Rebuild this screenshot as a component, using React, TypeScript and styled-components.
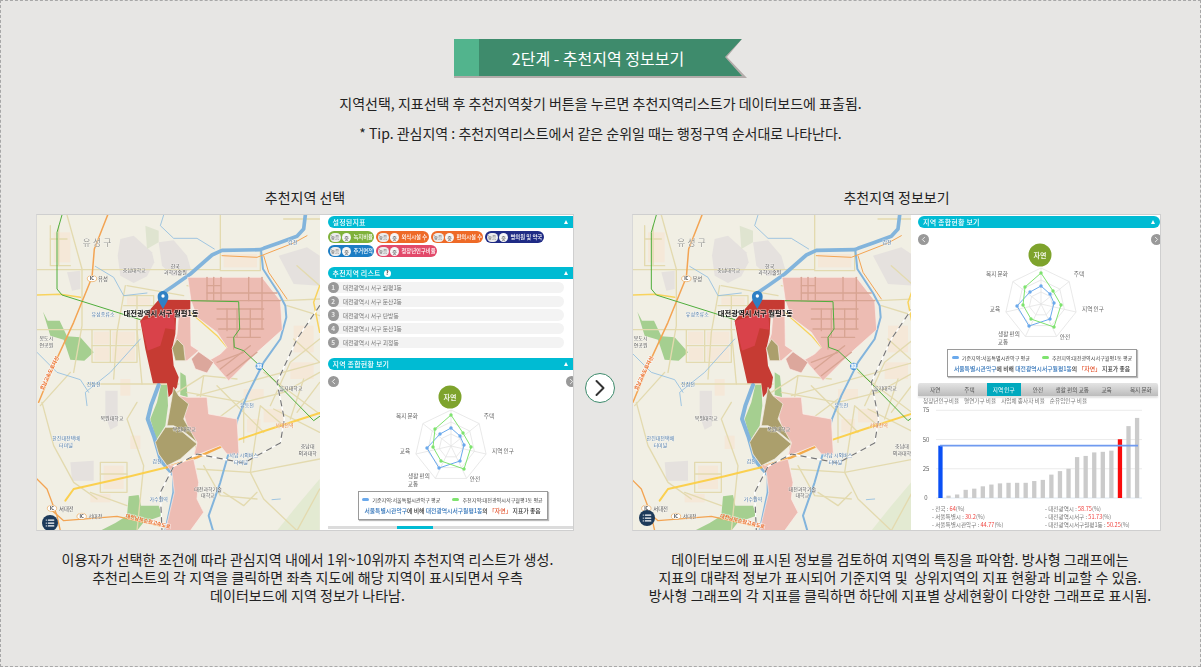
import React from "react";
import styled, { createGlobalStyle } from "styled-components";
import { ChevronLeft, ChevronRight, List } from "lucide-react";

const FONT = '"Noto Sans CJK KR", "Noto Sans", sans-serif';

const GlobalStyle = createGlobalStyle`
  html, body { margin: 0; padding: 0; background: #e7e6e4; }
  * { box-sizing: border-box; }
  body { font-family: ${FONT}; }
`;

/* ---------- map drawing, numbers are in 3x crop coordinates ---------- */

const WATER = [
  { d: "M825 28 L820 70 L800 92 L745 112 L700 128 L690 132 L575 134 L545 148 L480 205 L430 240 L398 262", w: 11 },
  { d: "M692 132 L698 190 L745 262 L765 300 L768 335 L750 400 L700 470 L650 570 L622 640 L600 725 L570 830 L535 930 L548 975", w: 6 },
  { d: "M385 538 L362 600 L352 640 L372 695 L392 765 L432 810 L432 860 L408 975", w: 12 },
];
const STREAMS = [
  "M20 440 L80 500 L150 522 L175 560",
  "M195 182 L250 215 L280 270 L350 262",
  "M400 28 L390 60 L430 98 L500 98 L552 130",
  "M170 600 L165 560 L240 500 L330 400",
  "M725 882 L750 880",
];
const ROADS = [
  "M20 192 L570 192 L570 28",
  "M20 372 L330 372",
  "M110 28 L155 190 L155 360 L130 500",
  "M285 240 L260 380 L250 520",
  "M170 535 L445 535",
  "M35 590 L70 720 L130 830 L200 880",
  "M470 240 L760 285 L868 280",
  "M690 130 L690 195 L570 195",
  "M470 560 L640 590 L760 560 L868 500",
  "M520 510 L500 640 L495 745",
  "M640 580 L560 640 L520 660",
  "M760 660 L690 600 L660 800 L700 880 L800 975",
  "M500 790 L660 800 L868 760",
  "M320 590 L290 640 L340 780 L320 975",
  "M210 770 L210 860 L290 860 L290 770 L210 770",
  "M210 805 L290 805",
  "M185 372 L185 470 L320 470 L320 372",
  "M240 372 L240 470",
  "M185 420 L320 420",
  "M868 400 L780 470 L720 600",
  "M580 860 L640 900 L680 860",
  "M60 60 L60 180 L120 180",
  "M85 60 L85 180",
  "M60 100 L110 100",
  "M800 975 L868 850",
  "M290 240 L460 270",
  "M280 270 L370 270 L370 340",
  "M280 300 L370 300",
  "M320 270 L320 372",
  "M320 372 L335 535",
  "M500 570 L868 470",
  "M560 540 L700 680",
  "M640 590 L640 710",
  "M700 500 L868 625",
  "M520 780 L570 870 L680 880",
  "M800 180 L868 240",
  "M770 300 L868 330",
  "M790 400 L868 470",
  "M820 520 L780 640",
  "M730 610 L868 680",
  "M120 500 L30 600",
  "M180 860 L290 900",
  "M760 40 L868 40",
  "M868 530 L800 620",
  "M440 560 L520 510 L620 520",
];
const BLOCKS = [
  { x: 190, y: 378, w: 46, h: 38 }, { x: 246, y: 378, w: 68, h: 38 }, { x: 192, y: 425, w: 44, h: 40 },
  { x: 246, y: 425, w: 68, h: 40 }, { x: 290, y: 275, w: 70, h: 22 }, { x: 700, y: 300, w: 50, h: 50 },
  { x: 640, y: 550, w: 60, h: 30 }, { x: 700, y: 610, w: 60, h: 40 }, { x: 220, y: 780, w: 60, h: 70 },
  { x: 780, y: 470, w: 70, h: 50 }, { x: 70, y: 80, w: 50, h: 90 }, { x: 270, y: 520, w: 30, h: 50 },
  { x: 580, y: 145, w: 100, h: 40 }, { x: 790, y: 360, w: 60, h: 80 }, { x: 180, y: 865, w: 60, h: 25 },
  { x: 300, y: 690, w: 30, h: 40 }, { x: 650, y: 640, w: 40, h: 40 },
];
const PARKS = [
  "M38 318 L52 345 L88 345 L110 392 L150 395 L190 440 L162 465 L120 462 L100 402 L60 390 Z",
  "M295 872 L325 868 L332 900 L385 900 L395 930 L340 950 L320 975 L210 975 L255 952 L290 930 Z",
  "M392 538 L410 538 L413 600 L405 660 L378 702 L360 640 L380 590 Z",
  "M450 500 L466 510 L472 575 L450 568 Z",
  "M740 975 L800 900 L868 820 L868 975 Z",
  "M345 60 L385 75 L385 110 L350 130 Z",
];
const CAMPUS = [
  "M270 100 L310 90 L365 140 L372 170 L350 212 L310 232 L270 210 L262 150 Z",
  "M385 110 L430 104 L470 150 L482 192 L430 212 L395 180 Z",
  "M225 555 L262 555 L262 660 L240 672 L225 630 Z",
  "M110 200 L150 195 L150 250 L125 255 Z",
  "M120 770 L190 765 L190 825 L125 825 Z",
  "M745 150 L830 125 L868 150 L868 240 L790 235 Z",
];
const PINK = [
  "M472 215 L695 215 L750 285 L756 372 L680 440 L595 525 L540 462 L570 445 L590 425 L560 380 L500 335 L482 285 Z",
  "M445 325 L480 285 L482 420 L505 435 L470 465 L435 465 L425 430 L440 385 Z",
  "M445 570 L470 575 L530 575 L535 625 L620 640 L626 745 L590 745 L570 720 L490 752 L500 712 L470 660 Z",
  "M380 705 L420 780 L490 760 L505 830 L500 880 L520 920 L480 975 L405 975 L432 860 L425 800 L385 745 Z",
];
const PINK_GRID = [
  "M530 215 L530 285", "M550 215 L550 285", "M572 215 L572 285", "M655 215 L655 285", "M695 215 L695 285",
  "M530 240 L570 240", "M530 262 L740 262", "M482 285 L750 285", "M560 310 L700 310", "M560 340 L700 340",
  "M565 370 L700 370", "M590 395 L690 395", "M610 400 L610 430", "M560 470 L640 440", "M570 490 L660 420", "M590 510 L680 440",
  "M590 310 L590 375", "M620 310 L620 395", "M660 310 L660 395", "M695 285 L695 370",
];
const OLIVE = [
  "M425 428 L440 400 L460 420 L465 465 L435 465 Z",
  "M410 660 L430 545 L445 570 L475 595 L460 640 L500 710 L470 685 L430 660 Z",
  "M375 710 L405 665 L440 665 L500 715 L450 760 L410 780 L385 745 Z",
];

const MAP_LABELS = [
  { x: 200, y: 122, t: "유 성 구", c: "#9a9a94", s: 27 },
  { x: 312, y: 198, t: "충남대학교", c: "#555", s: 15 },
  { x: 435, y: 188, t: "한국", c: "#555", s: 15 },
  { x: 435, y: 206, t: "과학기술원", c: "#555", s: 15 },
  { x: 218, y: 225, t: "유성", c: "#555", s: 16 },
  { x: 218, y: 332, t: "유성종류소", c: "#4b78a8", s: 15 },
  { x: 48, y: 402, t: "봉도시", c: "#555", s: 15 },
  { x: 48, y: 425, t: "연공원", c: "#555", s: 15 },
  { x: 190, y: 540, t: "진잠천", c: "#4b78a8", s: 15 },
  { x: 245, y: 644, t: "목원대학교", c: "#555", s: 15 },
  { x: 107, y: 704, t: "한진대전택배", c: "#4b78a8", s: 15 },
  { x: 107, y: 724, t: "터미널", c: "#4b78a8", s: 15 },
  { x: 108, y: 915, t: "서대전", c: "#555", s: 16 },
  { x: 195, y: 938, t: "서대전", c: "#555", s: 15 },
  { x: 385, y: 885, t: "가수원역", c: "#4b78a8", s: 15 },
  { x: 533, y: 855, t: "대전과학기술", c: "#555", s: 15 },
  { x: 533, y: 875, t: "대학교", c: "#555", s: 15 },
  { x: 650, y: 603, t: "유등천", c: "#4b78a8", s: 15 },
  { x: 782, y: 554, t: "을지대학교", c: "#555", s: 15 },
  { x: 832, y: 728, t: "충남대", c: "#555", s: 15 },
  { x: 832, y: 747, t: "의과대학", c: "#555", s: 15 },
  { x: 762, y: 665, t: "서대전역", c: "#e2762a", s: 15 },
  { x: 640, y: 754, t: "서남 시외버스", c: "#4b78a8", s: 15 },
  { x: 632, y: 774, t: "터미널", c: "#4b78a8", s: 15 },
  { x: 380, y: 772, t: "갑천", c: "#4b78a8", s: 15 },
  { x: 787, y: 114, t: "갑천", c: "#4b78a8", s: 15 },
  { x: 462, y: 675, t: "목원대학교", c: "#555", s: 15 },
];

const MapLine = styled.path<{ $color: string; $w: number; $dash?: string }>`
  fill: none;
  stroke: ${(p) => p.$color};
  stroke-width: ${(p) => p.$w};
  stroke-linecap: round;
  stroke-linejoin: round;
  stroke-dasharray: ${(p) => p.$dash || "none"};
`;
const MapArea = styled.path<{ $fill: string; $edge?: string }>`
  fill: ${(p) => p.$fill};
  stroke: ${(p) => p.$edge || "none"};
  stroke-width: 2;
`;
const MapText = styled.text<{ $color: string; $size: number; $bold?: boolean }>`
  font-family: ${FONT};
  font-size: ${(p) => p.$size}px;
  font-weight: ${(p) => (p.$bold ? 700 : 400)};
  fill: ${(p) => p.$color};
  text-anchor: middle;
  paint-order: stroke;
  stroke: rgba(255, 255, 255, 0.6);
  stroke-width: ${(p) => (p.$bold ? 4 : 2)}px;
`;
const MapSvg = styled.svg`
  display: block;
  width: 100%;
  height: 100%;
  background: #f1efe4;
`;

function ICBadge({ x, y }: { x: number; y: number }) {
  return (
    <g>
      <ellipse cx={x} cy={y} rx={14} ry={9} fill="#fff" stroke="#e9a24f" strokeWidth={2} />
      <MapText x={x} y={y + 5} $color="#333" $size={13} $bold>IC</MapText>
    </g>
  );
}

function MapDrawing({ viewWidth, viewLeft }: { viewWidth: number; viewLeft: number }) {
  return (
    <MapSvg viewBox={`${viewLeft} 28 ${viewWidth} 947`} preserveAspectRatio="xMinYMin slice">
      {BLOCKS.map((b, i) => <rect key={i} x={b.x} y={b.y} width={b.w} height={b.h} fill="#f5e8d8" />)}
      {CAMPUS.map((d, i) => <MapArea key={i} d={d} $fill="#e5e1de" />)}
      {PARKS.map((d, i) => <MapArea key={i} d={d} $fill={i === 4 ? "#e3ead2" : i === 5 ? "#dfe4d0" : "#a5cf90"} />)}
      {ROADS.map((d, i) => <MapLine key={i} d={d} $color="#e3daaf" $w={4} />)}
      {STREAMS.map((d, i) => <MapLine key={i} d={d} $color="#8fbde0" $w={2.5} />)}
      {WATER.map((r, i) => <MapLine key={i} d={r.d} $color="#82b4dc" $w={r.w} />)}
      {/* highways */}
      <MapLine d="M232 28 L192 130 L185 215 L130 350 L70 480 L25 590" $color="#f3a453" $w={4.5} />
      <MapLine d="M20 268 L90 266 L150 275" $color="#f8d35e" $w={4.5} />
      <MapLine d="M868 240 L850 290 L868 380" $color="#f8d35e" $w={4.5} />
      <MapLine d="M105 885 L130 850 L300 812 L410 785" $color="#fbd04f" $w={6} />
      <MapLine d="M410 785 L500 755 L600 710" $color="#f4ab4a" $w={7} />
      <MapLine d="M600 710 L720 670 L868 622" $color="#fbd04f" $w={6} />
      <MapLine d="M575 150 L680 155 L790 112 L830 90" $color="#f3a453" $w={3} />
      <MapLine d="M700 150 L715 200 L770 280" $color="#f3a453" $w={3} />
      <MapLine d="M20 820 L50 850 L80 930 L90 975" $color="#f3a453" $w={4} />
      <MapLine d="M60 910 L100 945 L260 932 L440 972" $color="#f3a453" $w={4} />
      <MapLine d="M480 320 L560 390 L590 425" $color="#f8d35e" $w={4} />
      {PINK.map((d, i) => <MapArea key={i} d={d} $fill="#edbcb3" $edge="#fbeeea" />)}
      {PINK_GRID.map((d, i) => <MapLine key={i} d={d} $color="#d8a493" $w={4} />)}
      <MapArea d="M483 460 L505 438 L550 470 L530 502 L495 490 Z" $fill="#dca79c" $edge="#fbeeea" />
      {/* selected dong */}
      <MapArea d="M330 345 L385 282 L480 283 L480 310 L438 320 L435 385 L425 430 L430 480 L445 515 L440 545 L415 575 L410 533 L368 533 L345 430 Z" $fill="#c63b33" />
      <MapArea d="M330 345 L430 320 L435 372 L405 368 L390 420 L352 435 Z" $fill="#d9424a" />
      {OLIVE.map((d, i) => <MapArea key={i} d={d} $fill="#ab9f6c" $edge="#f4efe6" />)}
      {/* subway */}
      <MapLine d="M95 28 L80 80 L80 250 L95 268 L330 342" $color="#4fae3c" $w={3} />
      <MapLine d="M482 285 L625 288 L628 370 L610 395 L612 425 L640 435 L690 482 L850 645 L868 632" $color="#4fae3c" $w={3} />
      {/* railway */}
      <MapLine d="M868 300 L800 400 L740 530 L762 640 L750 712 L640 772 L500 745 L430 782 L390 860 L395 975" $color="#fff" $w={4} />
      <MapLine d="M868 300 L800 400 L740 530 L762 640 L750 712 L640 772 L500 745 L430 782 L390 860 L395 975" $color="#777" $w={3.5} $dash="16 16" />
      <ICBadge x={185} y={219} />
      <ICBadge x={65} y={908} />
      <ICBadge x={154} y={932} />
      <circle cx={687} cy={482} r={11} fill="#3f8fd8" />
      <MapText x={687} y={487} $color="#fff" $size={13} $bold>32</MapText>
      {MAP_LABELS.map((l) => <MapText key={l.x + l.t} x={l.x} y={l.y} $color={l.c} $size={l.s}>{l.t}</MapText>)}
      <MapText x={0} y={0} $color="#ec6d2d" $size={15} $bold transform="translate(62 505) rotate(-64)">호남고속도로지선</MapText>
      <MapText x={0} y={0} $color="#ec6d2d" $size={15} $bold transform="translate(352 952) rotate(14)">대전남부순환고속도로</MapText>
      <MapText x={392} y={332} $color="#111" $size={22} $bold>대전광역시 서구 월평1동</MapText>
      {/* pin */}
      <path d="M398 310 C390 294 382 286 382 273 C382 263 389 256 398 256 C407 256 414 263 414 273 C414 286 406 294 398 310 Z" fill="#2f80c4" />
      <circle cx={398} cy={271} r={5} fill="#fff" />
    </MapSvg>
  );
}

/* ---------- dashboard parts ---------- */

const Bar = styled.div<{ $round?: boolean }>`
  height: 12px;
  background: #00bbd3;
  border-radius: ${(p) => (p.$round ? "6px" : "6px 0 0 6px")};
  color: #fff;
  font-size: 7px;
  font-weight: 500;
  letter-spacing: 0.2px;
  display: flex;
  align-items: center;
  padding: 0 5px;
  gap: 3px;
`;
const BarArrow = styled.span`
  margin-left: auto;
  width: 0;
  height: 0;
  border-left: 2.5px solid transparent;
  border-right: 2.5px solid transparent;
  border-bottom: 4px solid #fff;
`;
const HelpMark = styled.span`
  width: 7px;
  height: 7px;
  border-radius: 50%;
  background: #fff;
  color: #333;
  font-size: 5.5px;
  font-weight: 700;
  line-height: 7px;
  text-align: center;
`;

const ChipWrap = styled.div`
  display: flex;
  flex-wrap: wrap;
  gap: 2px 2px;
  margin: 3px 0 10px;
  width: 225px;
`;
const Chip = styled.span<{ $color: string; $width: number }>`
  width: ${(p) => p.$width}px;
  height: 12px;
  border-radius: 6px;
  background: ${(p) => p.$color};
  display: inline-flex;
  align-items: center;
  padding: 0 2px;
  gap: 1.5px;
  color: #fff;
  font-size: 5.3px;
  font-weight: 500;
  white-space: nowrap;
`;
const ChipLevel = styled.span`
  flex: none;
  width: 11px;
  height: 9px;
  border-radius: 5px;
  background: #ececec;
  color: #888;
  font-size: 4.6px;
  line-height: 9px;
  text-align: center;
`;
const ChipGrade = styled.span`
  flex: none;
  width: 9px;
  height: 9px;
  border-radius: 50%;
  background: #f6f6f6;
  color: #777;
  font-size: 5px;
  line-height: 9px;
  text-align: center;
  margin-right: 1px;
`;

const RankList = styled.ol`
  list-style: none;
  margin: 3px 0 10px;
  padding: 0;
  display: flex;
  flex-direction: column;
  gap: 2.4px;
`;
const RankRow = styled.li`
  width: 236px;
  height: 11.3px;
  border-radius: 6px;
  background: #f3f3f3;
  display: flex;
  align-items: center;
  gap: 4px;
  color: #777;
  font-size: 5.8px;
`;
const RankNum = styled.span`
  width: 11.3px;
  height: 11.3px;
  border-radius: 50%;
  background: #999;
  color: #e8e8e8;
  font-size: 6.5px;
  font-weight: 700;
  line-height: 11.3px;
  text-align: center;
`;

const SummaryBox = styled.div`
  position: relative;
  height: 121px;
  padding-top: 6px;
`;
const RoundNav = styled.span<{ $side: "left" | "right"; $offset: number }>`
  position: absolute;
  top: 6px;
  ${(p) => p.$side}: ${(p) => p.$offset}px;
  width: 11px;
  height: 11px;
  border-radius: 50%;
  background: #999;
  color: #eee;
  display: flex;
  align-items: center;
  justify-content: center;
`;
const RadarSvg = styled.svg`
  display: block;
  width: 240px;
  height: 115px;
`;
const RadarText = styled.text`
  font-family: ${FONT};
  font-size: 5.6px;
  fill: #666;
  text-anchor: middle;
`;
const RadarBadge = styled.text`
  font-family: ${FONT};
  font-size: 7px;
  font-weight: 700;
  fill: #f1f5e6;
  text-anchor: middle;
`;

const RADAR_GREEN = [[0, -31], [12, -13], [20, 1], [13, 23], [-10, 15], [-18, 1], [-16, -17]];
const RADAR_BLUE = [[0, -18], [9, -10], [13, -1], [9, 15], [-12, 22], [-24, 2], [-11, -12]];
const RADAR_LABELS = [
  { x: 38, y: -28, t: "주택" },
  { x: 52, y: 7, t: "지역 인구" },
  { x: 24, y: 35, t: "안전" },
  { x: -32, y: 32, t: "생활 편의" },
  { x: -38, y: 40, t: "교통" },
  { x: -46, y: 7, t: "교육" },
  { x: -44, y: -28, t: "복지 문화" },
];

const toPoints = (list: number[][]) => list.map(([x, y]) => `${x},${y}`).join(" ");
const ringPoints = (r: number) =>
  Array.from({ length: 7 }, (_, i) => {
    const a = (i * 2 * Math.PI) / 7 - Math.PI / 2;
    return [Math.cos(a) * r, Math.sin(a) * r];
  });

function RadarChart() {
  return (
    <RadarSvg viewBox="0 0 240 115">
      <circle cx={122} cy={21} r={11.5} fill="#7ea32c" />
      <RadarBadge x={122} y={24}>자연</RadarBadge>
      <g transform="translate(123 70)">
        {[12, 24, 36].map((r) => (
          <polygon key={r} points={toPoints(ringPoints(r))} fill="none" stroke="#e3e3e3" strokeWidth={0.8} />
        ))}
        {ringPoints(36).map(([x, y], i) => (
          <line key={i} x1={0} y1={0} x2={x} y2={y} stroke="#e3e3e3" strokeWidth={0.8} />
        ))}
        <polygon points={toPoints(RADAR_BLUE)} fill="none" stroke="#6aa9ec" strokeWidth={1} />
        <polygon points={toPoints(RADAR_GREEN)} fill="none" stroke="#7fe36f" strokeWidth={1} />
        {RADAR_BLUE.map(([x, y], i) => <circle key={i} cx={x} cy={y} r={1.7} fill="#6aa9ec" />)}
        {RADAR_GREEN.map(([x, y], i) => <circle key={i} cx={x} cy={y} r={1.7} fill="#7fe36f" />)}
        {RADAR_LABELS.map((l) => <RadarText key={l.t} x={l.x} y={l.y}>{l.t}</RadarText>)}
      </g>
    </RadarSvg>
  );
}

const LegendBox = styled.div<{ $tall?: boolean }>`
  width: 190px;
  height: ${(p) => (p.$tall ? 29 : 28)}px;
  margin-left: ${(p) => (p.$tall ? 30 : 29)}px;
  border: 1px solid #9a9a9a;
  box-shadow: 1px 1px 1px #bbb;
  background: #fff;
  display: flex;
  flex-direction: column;
  align-items: center;
  justify-content: center;
  gap: 3px;
  font-size: 5.1px;
  color: #444;
  white-space: nowrap;
`;
const LegendKeys = styled.div`
  display: flex;
  gap: 12px;
`;
const LegendKey = styled.span<{ $color: string }>`
  display: inline-flex;
  align-items: center;
  gap: 3px;
  &::before {
    content: "";
    width: 7px;
    height: 3px;
    border-radius: 2px;
    background: ${(p) => p.$color};
  }
`;
const LegendNote = styled.div`
  font-size: 5.8px;
  font-weight: 500;
  color: #333;
`;
const Tone = styled.span<{ $color: string }>`
  color: ${(p) => p.$color};
`;

function Legend({ tall }: { tall?: boolean }) {
  return (
    <LegendBox $tall={tall}>
      <LegendKeys>
        <LegendKey $color="#6aa9ec">기준지역:서울특별시관악구 평균</LegendKey>
        <LegendKey $color="#7fe36f">추천지역:대전광역시서구월평1동 평균</LegendKey>
      </LegendKeys>
      <LegendNote>
        <Tone $color="#2f72b8">서울특별시관악구</Tone>에 비해 <Tone $color="#2f72b8">대전광역시서구월평1동</Tone>의{" "}
        <Tone $color="#e2502a">「자연」</Tone> 지표가 좋음
      </LegendNote>
    </LegendBox>
  );
}

const ScrollTrack = styled.div`
  height: 3px;
  margin-top: 6px;
  background: #dcdcdc;
  padding-left: 69px;
`;
const ScrollThumb = styled.div`
  width: 36px;
  height: 3px;
  background: #00bbd3;
`;

const TabStrip = styled.div`
  display: grid;
  grid-template-columns: repeat(7, 1fr);
  width: 240px;
  height: 13px;
  margin-top: 6px;
  background: linear-gradient(#e4e4e4, #bcbcbc);
  border-radius: 2px 2px 0 0;
  box-shadow: 0 2px 2px #e2e2e2;
`;
const Tab = styled.span<{ $active?: boolean }>`
  display: flex;
  align-items: center;
  justify-content: center;
  font-size: 5.6px;
  white-space: nowrap;
  color: ${(p) => (p.$active ? "#fff" : "#555")};
  background: ${(p) => (p.$active ? "#00a9be" : "transparent")};
`;
const SubMenu = styled.div`
  display: flex;
  gap: 5px;
  height: 8px;
  margin-top: 1px;
  padding-left: 5px;
  align-items: center;
  font-size: 5.6px;
  color: #777;
  white-space: nowrap;
`;
const BarSvg = styled.svg`
  display: block;
  width: 242px;
  height: 100px;
`;
const AxisText = styled.text`
  font-family: ${FONT};
  font-size: 6px;
  fill: #666;
  text-anchor: middle;
`;

const BAR_VALUES = [2, 3, 7, 8, 10, 11.5, 12.5, 13, 13, 13, 14.5, 15.5, 20, 23, 25, 35, 36, 39, 39.5, 40.5, 50.25, 61.5, 68.5];
const valueY = (v: number) => 91 - v * 1.169;

function BarChart() {
  return (
    <BarSvg viewBox="0 -2 242 100">
      {[75, 50, 25, 0].map((v) => (
        <g key={v}>
          <line x1={18} x2={224} y1={valueY(v)} y2={valueY(v)} stroke={v === 0 ? "#d7e3ef" : "#e6e6e6"} strokeWidth={0.8} />
          <AxisText x={8} y={valueY(v) + 2}>{v}</AxisText>
        </g>
      ))}
      <rect x={20.3} y={valueY(44.77)} width={4.3} height={91 - valueY(44.77)} fill="#0a50f5" />
      {BAR_VALUES.map((v, i) => (
        <rect
          key={i}
          x={28.4 + i * 8.57}
          y={valueY(v)}
          width={4.3}
          height={91 - valueY(v)}
          fill={v === 50.25 ? "#fa0a0a" : "#cbcbcb"}
        />
      ))}
      <line x1={22} x2={220} y1={valueY(44.77)} y2={valueY(44.77)} stroke="#6f9af0" strokeWidth={1.6} />
    </BarSvg>
  );
}

const StatGrid = styled.div`
  display: grid;
  grid-template-columns: 113px 1fr;
  grid-auto-rows: 8px;
  padding-left: 14px;
  font-size: 5.6px;
  color: #777;
  white-space: nowrap;
  line-height: 8px;
`;
const StatValue = styled.span`
  color: #f0433f;
`;

const STATS: [string, string][] = [
  ["전국", "64"],
  ["대전광역시", "58.75"],
  ["서울특별시", "30.2"],
  ["대전광역시서구", "51.73"],
  ["서울특별시관악구", "44.77"],
  ["대전광역시서구월평1동", "50.25"],
];

const TABS = ["자연", "주택", "지역 인구", "안전", "생활 편의 교통", "교육", "복지 문화"];

const CHIPS = [
  { label: "녹지비율", color: "#7fb13a", w: 46 },
  { label: "외식시설 수", color: "#ee6a27", w: 53 },
  { label: "편의시설 수", color: "#ee6a27", w: 52 },
  { label: "병의원 및 약국", color: "#1f2b85", w: 59 },
  { label: "주거면적", color: "#1c7dc4", w: 46 },
  { label: "청장년인구비율", color: "#e2496a", w: 61 },
];
const RANKS = ["월평1동", "둔산2동", "탄방동", "둔산1동", "괴정동"];

const Board = styled.div<{ $pad: number }>`
  flex: 1;
  min-width: 0;
  height: 100%;
  overflow: hidden;
  background: #fff;
  padding: 1px 0 0 ${(p) => p.$pad}px;
`;

function PickBoard() {
  return (
    <Board $pad={7.5}>
      <Bar>설정된지표<BarArrow /></Bar>
      <ChipWrap>
        {CHIPS.map((c) => (
          <Chip key={c.label} $color={c.color} $width={c.w}>
            <ChipLevel>높음</ChipLevel>
            <ChipGrade>중</ChipGrade>
            {c.label}
          </Chip>
        ))}
      </ChipWrap>
      <Bar>추천지역 리스트 <HelpMark>?</HelpMark><BarArrow /></Bar>
      <RankList>
        {RANKS.map((r, i) => (
          <RankRow key={r}>
            <RankNum>{i + 1}</RankNum>
            대전광역시 서구 {r}
          </RankRow>
        ))}
      </RankList>
      <Bar>지역 종합현황 보기<BarArrow /></Bar>
      <SummaryBox>
        <RoundNav $side="left" $offset={0}><ChevronLeft size={9} strokeWidth={2.5} /></RoundNav>
        <RoundNav $side="right" $offset={-4}><ChevronRight size={9} strokeWidth={2.5} /></RoundNav>
        <RadarChart />
      </SummaryBox>
      <Legend tall />
      <ScrollTrack><ScrollThumb /></ScrollTrack>
    </Board>
  );
}

function InfoBoard() {
  return (
    <Board $pad={7}>
      <Bar $round>지역 종합현황 보기<BarArrow /></Bar>
      <SummaryBox>
        <RoundNav $side="left" $offset={0}><ChevronLeft size={9} strokeWidth={2.5} /></RoundNav>
        <RoundNav $side="right" $offset={-2}><ChevronRight size={9} strokeWidth={2.5} /></RoundNav>
        <RadarChart />
      </SummaryBox>
      <Legend />
      <TabStrip>
        {TABS.map((t) => <Tab key={t} $active={t === "지역 인구"}>{t}</Tab>)}
      </TabStrip>
      <SubMenu>
        <span>청장년인구비율</span>
        <span>혈연가구 비율</span>
        <span>사업체 종사자 비율</span>
        <span>순유입인구 비율</span>
      </SubMenu>
      <BarChart />
      <StatGrid>
        {STATS.map(([name, value]) => (
          <span key={name}>- {name} : <StatValue>{value}</StatValue>(%)</span>
        ))}
      </StatGrid>
    </Board>
  );
}

/* ---------- page ---------- */

const Page = styled.div`
  width: 1201px;
  height: 667px;
  border: 1px dashed #a8a8a8;
  background: #e7e6e4;
  padding-top: 38px;
  overflow: hidden;
  color: #222;
  font-family: ${FONT};
`;
const RibbonShadow = styled.div`
  width: 293px;
  height: 39px;
  margin: 0 0 0 453px;
  background: #b3acaa;
  clip-path: polygon(0 0, 288px 0, 273px 18px, 293px 39px, 0 39px);
`;
const RibbonFace = styled.h1`
  margin: 0;
  height: 37px;
  padding-right: 5px;
  display: flex;
  align-items: center;
  justify-content: center;
  background: linear-gradient(90deg, #52b48d 25px, #3e8b6c 25px);
  clip-path: polygon(0 0, 288px 0, 271px 18px, 288px 37px, 0 37px);
  color: #fff;
  font-size: 16px;
  font-weight: 400;
`;
const Intro = styled.div`
  margin-top: 10px;
  text-align: center;
  font-size: 14px;
  line-height: 30px;
`;
const Row = styled.div`
  display: grid;
  grid-template-columns: 538px 58px 529px;
  margin: 39px 0 0 35px;
`;
const Column = styled.section``;
const ColumnTitle = styled.h2`
  margin: 0 0 7px;
  height: 20px;
  font-size: 14px;
  line-height: 20px;
  font-weight: 400;
  text-align: center;
`;
const Shot = styled.div`
  height: 317px;
  display: flex;
  border: 1px solid #cfcfcf;
  border-left-color: #d8d8d8;
  overflow: hidden;
  filter: blur(0.25px);
`;
const MapPane = styled.div<{ $width: number }>`
  position: relative;
  flex: 0 0 ${(p) => p.$width}px;
  height: 100%;
  overflow: hidden;
`;
const LayerButton = styled.span<{ $left: number; $bottom: number }>`
  position: absolute;
  left: ${(p) => p.$left}px;
  bottom: ${(p) => p.$bottom}px;
  width: 16px;
  height: 16px;
  border-radius: 50%;
  background: #1d3a5a;
  color: #fff;
  display: flex;
  align-items: center;
  justify-content: center;
`;
const Caption = styled.p<{ $shift: number }>`
  margin: 19px 0 0;
  padding-left: ${(p) => p.$shift}px;
  font-size: 14px;
  line-height: 18px;
  letter-spacing: 0.08px;
  text-align: center;
  white-space: pre-wrap;
`;
const ArrowCell = styled.div`
  display: flex;
  justify-content: flex-start;
  padding: 186px 0 0 11px;
`;
const NextCircle = styled.span`
  width: 30px;
  height: 30px;
  border-radius: 50%;
  border: 1px solid #3e8b6c;
  background: #fff;
  color: #333;
  display: flex;
  align-items: center;
  justify-content: center;
`;

export default function App() {
  return (
    <>
      <GlobalStyle />
      <Page>
        <RibbonShadow>
          <RibbonFace>2단계 - 추천지역 정보보기</RibbonFace>
        </RibbonShadow>
        <Intro>
          <div>지역선택, 지표선택 후 추천지역찾기 버튼을 누르면 추천지역리스트가 데이터보드에 표출됨.</div>
          <div>* Tip. 관심지역 : 추천지역리스트에서 같은 순위일 때는 행정구역 순서대로 나타난다.</div>
        </Intro>
        <Row>
          <Column>
            <ColumnTitle>추천지역 선택</ColumnTitle>
            <Shot>
              <MapPane $width={283}>
                <MapDrawing viewLeft={20} viewWidth={849} />
                <LayerButton $left={5} $bottom={-1}><List size={10} strokeWidth={3} /></LayerButton>
              </MapPane>
              <PickBoard />
            </Shot>
            <Caption $shift={5}>
              {"이용자가 선택한 조건에 따라 관심지역 내에서 1위~10위까지 추천지역 리스트가 생성.\n추천리스트의 각 지역을 클릭하면 좌측 지도에 해당 지역이 표시되면서 우측\n데이터보드에 지역 정보가 나타남."}
            </Caption>
          </Column>
          <ArrowCell>
            <NextCircle><ChevronRight size={34} strokeWidth={1.7} /></NextCircle>
          </ArrowCell>
          <Column>
            <ColumnTitle>추천지역 정보보기</ColumnTitle>
            <Shot>
              <MapPane $width={278}>
                <MapDrawing viewLeft={25} viewWidth={834} />
                <LayerButton $left={6} $bottom={4}><List size={10} strokeWidth={3} /></LayerButton>
              </MapPane>
              <InfoBoard />
            </Shot>
            <Caption $shift={7}>
              {"데이터보드에 표시된 정보를 검토하여 지역의 특징을 파악함. 방사형 그래프에는\n지표의 대략적 정보가 표시되어 기준지역 및  상위지역의 지표 현황과 비교할 수 있음.\n방사형 그래프의 각 지표를 클릭하면 하단에 지표별 상세현황이 다양한 그래프로 표시됨."}
            </Caption>
          </Column>
        </Row>
      </Page>
    </>
  );
}
